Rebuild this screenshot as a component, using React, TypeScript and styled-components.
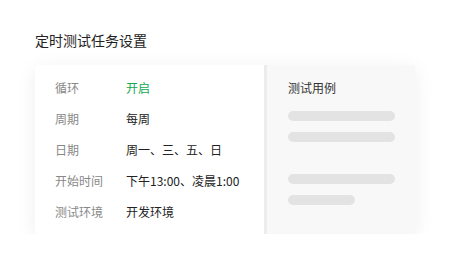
import React from 'react'
import styled, { createGlobalStyle } from 'styled-components'

const GlobalStyle = createGlobalStyle`
  body {
    margin: 0;
    background: #fff;
    font-family: "Noto Sans CJK SC", "Noto Sans", sans-serif;
  }
`

const Page = styled.div`
  padding: 30px 35px 0 35px;
`

const Title = styled.h2`
  margin: 0 0 15px;
  font-size: 14px;
  line-height: 20px;
  font-weight: 400;
  color: #222;
`

const Card = styled.div`
  display: flex;
  width: 380px;
  height: 169px;
  background: #f8f8f8;
  border-radius: 3px;
  box-shadow: 0 4px 20px rgba(0, 0, 0, 0.07);
  overflow: hidden;
`

const InfoPanel = styled.div`
  width: 232px;
  padding: 7px 20px;
  box-sizing: border-box;
  background: #fff;
  border-right: 3px solid #ececec;
`

const Row = styled.div`
  display: flex;
  align-items: center;
  height: 31px;
  font-size: 12px;
`

const Label = styled.span`
  width: 71px;
  color: #888;
`

const Value = styled.span<{ $accent?: boolean }>`
  color: ${(p) => (p.$accent ? '#12a84f' : '#222')};
`

const CasePanel = styled.div`
  flex: 1;
  padding: 14px 20px 0 21px;
  display: flex;
  flex-direction: column;
`

const CaseTitle = styled.div`
  font-size: 12px;
  line-height: 18px;
  color: #333;
  margin-bottom: 14px;
`

const Bar = styled.div<{ $w: number; $gap: number }>`
  width: ${(p) => p.$w}px;
  height: 10px;
  border-radius: 5px;
  background: #e3e3e3;
  margin-bottom: ${(p) => p.$gap}px;
`

const rows = [
  { label: '循环', value: '开启', accent: true },
  { label: '周期', value: '每周' },
  { label: '日期', value: '周一、三、五、日' },
  { label: '开始时间', value: '下午13:00、凌晨1:00' },
  { label: '测试环境', value: '开发环境' },
]

export default function App() {
  return (
    <>
      <GlobalStyle />
      <Page>
        <Title>定时测试任务设置</Title>
        <Card>
          <InfoPanel>
            {rows.map((r) => (
              <Row key={r.label}>
                <Label>{r.label}</Label>
                <Value $accent={r.accent}>{r.value}</Value>
              </Row>
            ))}
          </InfoPanel>
          <CasePanel>
            <CaseTitle>测试用例</CaseTitle>
            <Bar $w={107} $gap={11} />
            <Bar $w={107} $gap={32} />
            <Bar $w={107} $gap={11} />
            <Bar $w={67} $gap={0} />
          </CasePanel>
        </Card>
      </Page>
    </>
  )
}
